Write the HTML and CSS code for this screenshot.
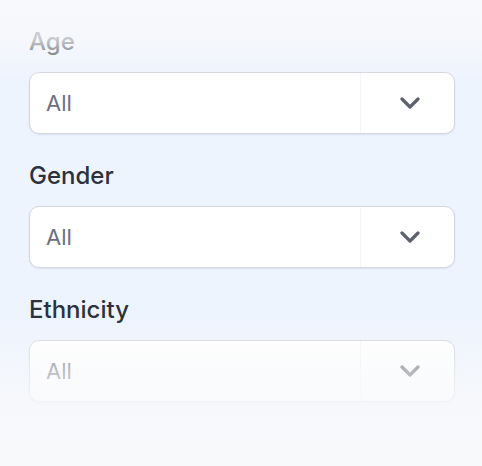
FILE: index.html
```html
<!DOCTYPE html>
<html lang="en">
<head>
<meta charset="utf-8">
<link rel="stylesheet" href="styles.css">
</head>
<body>
<div class="panel">
  <div class="field">
    <label class="label">Age</label>
    <div class="select">
      <span class="value">All</span>
      <span class="toggle"><svg width="20" height="12" viewBox="0 0 20 12"><path d="M2 2 L10 10 L18 2" fill="none" stroke="#5c616c" stroke-width="3.2" stroke-linecap="round" stroke-linejoin="round"/></svg></span>
    </div>
  </div>
  <div class="field">
    <label class="label">Gender</label>
    <div class="select">
      <span class="value">All</span>
      <span class="toggle"><svg width="20" height="12" viewBox="0 0 20 12"><path d="M2 2 L10 10 L18 2" fill="none" stroke="#5c616c" stroke-width="3.2" stroke-linecap="round" stroke-linejoin="round"/></svg></span>
    </div>
  </div>
  <div class="field">
    <label class="label">Ethnicity</label>
    <div class="select">
      <span class="value">All</span>
      <span class="toggle"><svg width="20" height="12" viewBox="0 0 20 12"><path d="M2 2 L10 10 L18 2" fill="none" stroke="#5c616c" stroke-width="3.2" stroke-linecap="round" stroke-linejoin="round"/></svg></span>
    </div>
  </div>
</div>
<div class="fade fade-top"></div>
<div class="fade fade-bottom"></div>
</body>
</html>
```

FILE: styles.css
```css
html, body {
  margin: 0;
  height: 100%;
}
body {
  background: #eef4fe;
  font-family: Inter, "Noto Sans", sans-serif;
  position: relative;
  overflow: hidden;
}
.panel {
  display: flex;
  flex-direction: column;
  gap: 26px;
  padding: 26px 27px 0 29px;
}
.field {
  display: flex;
  flex-direction: column;
  gap: 14px;
}
.label {
  font-size: 24px;
  line-height: 32px;
  font-weight: 500;
  color: #2c313c;
}
.select {
  height: 60px;
  background: #ffffff;
  border: 1px solid #d3d6dc;
  border-radius: 10px;
  box-shadow: 0 1px 2px rgba(30, 40, 60, 0.08);
  display: flex;
  align-items: center;
}
.value {
  flex: 1;
  padding-left: 16px;
  font-size: 22px;
  color: #6b7080;
}
.toggle {
  width: 89px;
  align-self: stretch;
  border-left: 1px solid #f4f5f7;
  display: flex;
  align-items: center;
  justify-content: center;
  padding-left: 4px;
}
.toggle svg {
  display: block;
}
.fade {
  position: absolute;
  left: 0;
  right: 0;
  pointer-events: none;
}
.fade-top {
  top: 0;
  height: 80px;
  background: linear-gradient(to bottom,
    rgba(248, 249, 251, 0.95) 0px,
    rgba(248, 249, 251, 0.75) 40px,
    rgba(248, 249, 251, 0.2) 66px,
    rgba(248, 249, 251, 0) 80px);
}
.fade-bottom {
  top: 322px;
  bottom: 0;
  background: linear-gradient(to bottom,
    rgba(248, 249, 251, 0) 0px,
    rgba(248, 249, 251, 0.55) 48px,
    rgba(248, 249, 251, 0.8) 80px,
    rgba(248, 249, 251, 1) 120px);
}
```
